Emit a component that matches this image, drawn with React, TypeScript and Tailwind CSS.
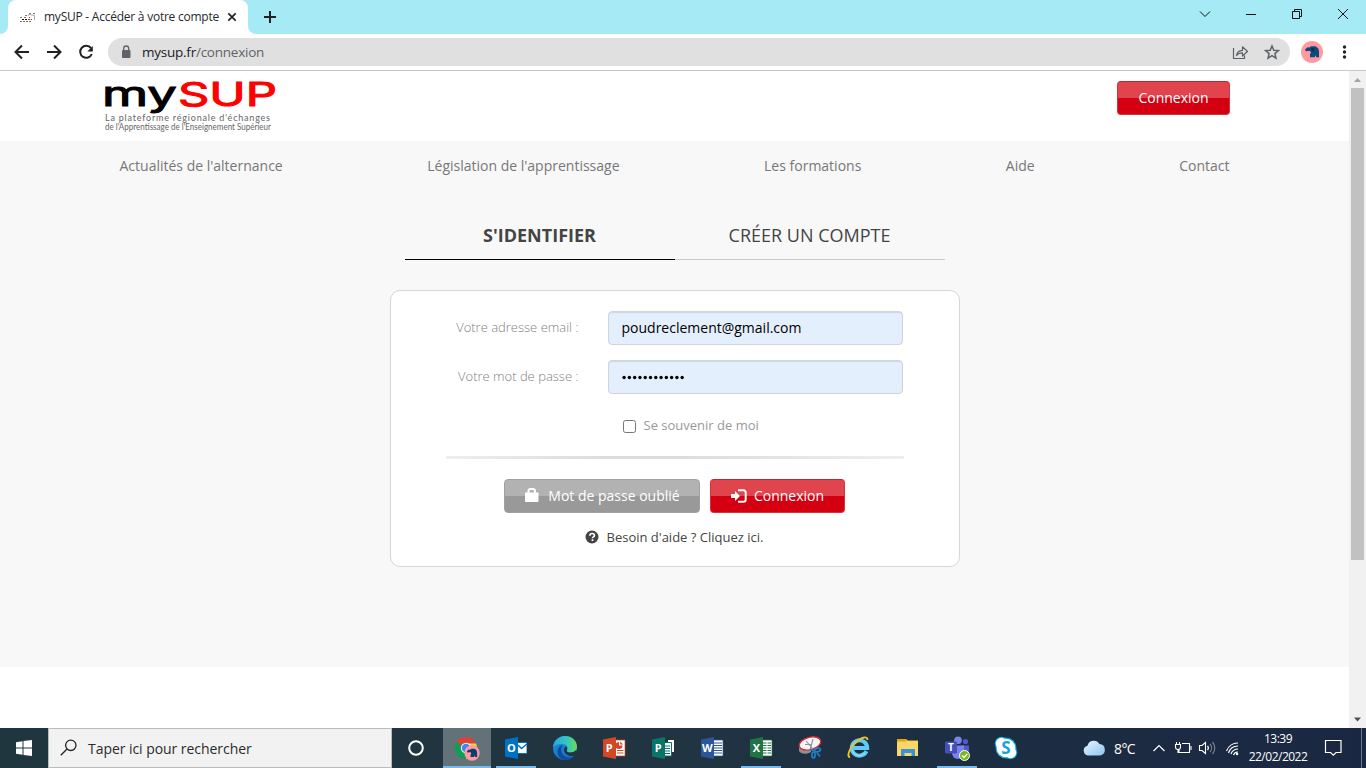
import React from "react";

const ui = "font-['Open_Sans','Noto_Sans',sans-serif]";

function Elephant({ className }: { className: string }) {
  return (
    <svg viewBox="0 0 22 22" className={className}>
      <circle cx="11" cy="11" r="11" fill="#ff9aa2" />
      <path d="M4 8.500 6.500 6.300 8.500 6.500 10 5.300h4.500l2.700 2 .8 3v6h-3v-1.500h-1V16.300H9v-3l1-1.800-1-1.500H6.500L5 10.500z" fill="#0c4a7c" />
      <path d="M10 7h3.500l-.5 3-2 .5z" fill="#0a2f55" />
    </svg>
  );
}

function TitleBar() {
  return (
    <div className="flex h-[34px] bg-[#a5eaf4]">
      <div className="flex h-[34px] w-2 shrink-0 items-end bg-white">
        <div className="h-full w-full rounded-br-lg bg-[#a5eaf4]" />
      </div>
      <div className="flex w-[240px] shrink-0 items-center rounded-t-lg bg-white pl-3">
        <svg width="16" height="16" viewBox="0 0 16 16">
          <path d="M0 8.500h2M4 8.500h2M0 12.500h12M5 6.500h2M9 4.500h2M13 4.500h2" stroke="#777" strokeWidth="1" strokeDasharray="2 1" />
          <path d="M2 10.500h6" stroke="#111" strokeWidth="1" strokeDasharray="2 1" />
          <path d="M8 10.500h4M9 8.500h1" stroke="#e22" strokeWidth="1" strokeDasharray="2 .7" />
          <path d="M9 5.500l6 1M14.500 7v4M8 7l2-3" stroke="#888" strokeWidth=".7" />
        </svg>
        <span className={`${ui} ml-2 w-[176px] whitespace-nowrap text-[12px] leading-4 tracking-[-0.24px] text-[#26292d]`}>
          mySUP - Accéder à votre compte
        </span>
        <svg width="16" height="16" viewBox="0 0 16 16" className="ml-[4px]">
          <path d="m4.300 4.300 7.400 7.400m0-7.400-7.400 7.400" stroke="#222" strokeWidth="1.700" />
        </svg>
      </div>
      <div className="flex h-[34px] w-2 shrink-0 bg-white">
        <div className="h-full w-full rounded-bl-lg bg-[#a5eaf4]" />
      </div>
      <svg width="28" height="34" viewBox="0 0 28 34">
        <path d="M14 11v12M8 17h12" stroke="#202124" strokeWidth="2" />
      </svg>
      <svg width="186" height="34" viewBox="1180 0 186 34" className="ml-auto" fill="none" stroke="#111" strokeWidth="1">
        <path d="m1200 11.500 5 5 5-5" />
        <path d="M1246 14.500h10" />
        <path d="M1292.500 11.500h7v7h-7zM1294.500 11v-1.500h7v7H1300" />
        <path d="m1338 9 10 10m0-10-10 10" />
      </svg>
    </div>
  );
}

function Toolbar() {
  return (
    <div className="flex h-[37px] items-center border-b border-[#c6c8c9] bg-white">
      <svg width="108" height="36" viewBox="0 34 108 36" fill="none" stroke="#202124" strokeWidth="2">
        <path d="M29 52H16M22 45.500 15.500 52l6.500 6.500" />
        <path d="M47 52h13M54 45.500l6.500 6.500-6.500 6.500" />
        <path d="M91 48.200a6 6 0 1 0 .8 5.800" />
        <path d="M92.800 46v5.500h-5.500z" fill="#202124" stroke="none" />
      </svg>
      <div className="flex h-7 w-[1182px] items-center rounded-full bg-[#e0e0e0] pl-3">
        <svg width="12" height="14" viewBox="0 0 12 14">
          <rect x="2" y="5" width="8.500" height="8" rx="1" fill="#5f6368" />
          <path d="M3.700 5V3.500a2.500 2.500 0 0 1 5 0V5" fill="none" stroke="#5f6368" strokeWidth="1.300" />
        </svg>
        <span className={`${ui} ml-[10px] text-[13.5px] leading-5 tracking-[-0.24px] text-[#202124]`}>
          mysup.fr<span className="text-[#5f6368]">/connexion</span>
        </span>
        <svg width="60" height="28" viewBox="1230 38 60 28" className="ml-auto" fill="none" stroke="#5f6368">
          <path d="M1233.500 48v10.500h11v-3" strokeWidth="1.200" />
          <path d="M1236.500 55.500c.6-3.500 3-5 6-5.200v-3.500l5 4.700-5 4.500v-3.200c-3 0-4.500.5-6 2.700z" strokeWidth="1.200" strokeLinejoin="round" />
          <path d="m1272 46 1.800 4.200 4.600.4-3.500 3 1.100 4.500-4-2.400-4 2.400 1.100-4.500-3.500-3 4.600-.4z" strokeWidth="1.500" />
        </svg>
      </div>
      <Elephant className="ml-[11px] h-[22px] w-[22px]" />
      <svg width="8" height="16" viewBox="0 0 8 16" className="ml-[18px]" fill="#202124">
        <circle cx="3.500" cy="3" r="1.700" />
        <circle cx="3.500" cy="8" r="1.700" />
        <circle cx="3.500" cy="13" r="1.700" />
      </svg>
    </div>
  );
}

function Logo() {
  return (
    <svg width="190" height="70" viewBox="96 71 190 70" overflow="visible">
      <g fontFamily="Inter, sans-serif" fontWeight="400" strokeWidth="1">
        <text x="102" y="105.500" fontSize="34" textLength="75" lengthAdjust="spacingAndGlyphs" fill="#000" stroke="#000">my</text>
        <text x="178" y="105.500" fontSize="33" textLength="99" lengthAdjust="spacingAndGlyphs" fill="#f00" stroke="#f00">SUP</text>
      </g>
      <g fontFamily="Lato, sans-serif" fontSize="9" fill="#666">
        <text x="105" y="120.500" textLength="165" lengthAdjust="spacing">La plateforme régionale d'échanges</text>
        <text x="105" y="129.500" fontSize="8.500" textLength="166" lengthAdjust="spacingAndGlyphs">de l'Apprentissage de l'Enseignement Supérieur</text>
      </g>
    </svg>
  );
}

const button = "flex h-[34px] items-center justify-center rounded-[4px] border text-[14px] leading-5 text-white";
const red = "border-[#d9303b] border-t-[#c9202b] bg-[linear-gradient(#e0444d_50%,#d40012_50%)]";
const grey = "border-[#a0a0a0] bg-[linear-gradient(#b2b2b2_50%,#999_50%)]";

function Field({ label, value, secret }: { label: string; value: string; secret?: boolean }) {
  return (
    <div className="flex h-[34px] items-center">
      <label className="w-[188px] text-right text-[13px] font-light text-[#808080]">{label}</label>
      <div className="ml-[29px] flex h-[34px] w-[295px] items-center rounded-[4px] border border-[#d2d4d8] bg-[#e4effd] pl-[13px] text-[14px] text-black shadow-[inset_0_1px_1px_rgba(0,0,0,0.1)]">
        {secret ? (
          <svg width="66" height="8" viewBox="0 0 66 8" className="-ml-px" aria-label={value}>
            {Array.from({ length: 12 }, (_, i) => (
              <circle key={i} cx={3.100 + i * 5.280} cy="4.500" r="1.700" />
            ))}
          </svg>
        ) : (
          <span className="-mt-[2px]">{value}</span>
        )}
      </div>
    </div>
  );
}

function Page() {
  return (
    <div className="flex h-[657px] bg-white font-['Open_Sans',sans-serif]">
      <main className="w-[1349px]">
        <header className="flex h-[70px] items-start justify-between pl-[96px] pr-[119px]">
          <Logo />
          <button className={`${button} ${red} mt-[10px] w-[113px]`}>Connexion</button>
        </header>
        <div className="h-[526px] bg-[#f8f8f8]">
          <nav className="flex h-[48px] items-center justify-between px-[119.5px] text-[14px] text-[#777]">
            <a>Actualités de l'alternance</a>
            <a>Législation de l'apprentissage</a>
            <a>Les formations</a>
            <a>Aide</a>
            <a>Contact</a>
          </nav>
          <div className="mx-auto mt-[22px] flex h-[49px] w-[540px] text-center text-[18px] leading-[49px] text-[#444]">
            <div className="h-[49px] w-1/2 border-b border-black font-bold">S'IDENTIFIER</div>
            <div className="h-[49px] w-1/2 border-b border-[#c8c8c8]">CRÉER UN COMPTE</div>
          </div>
          <section className="mx-auto mt-[30px] flex h-[277px] w-[570px] flex-col rounded-[10px] border border-[#d6d6d6] bg-white pt-5">
            <Field label="Votre adresse email :" value="poudreclement@gmail.com" />
            <div className="h-[15px]" />
            <Field label="Votre mot de passe :" value="••••••••••••" secret />
            <div className="mt-[22px] flex h-5 items-center pl-[232px] text-[13px] text-[#999]">
              <span className="mr-[8px] mt-px h-[13px] w-[13px] rounded-[2.5px] border border-[#767676] bg-white" />
              Se souvenir de moi
            </div>
            <div className="ml-[55px] mt-[20px] h-[3px] w-[458px] bg-[linear-gradient(90deg,#eee,#dcdcdc_35%,#dcdcdc_50%,#eee)]" />
            <div className="mt-5 flex gap-[10px] pl-[113px]">
              <button className={`${button} ${grey} w-[196px] pl-[2px]`}>
                <svg width="14" height="14" viewBox="0 0 14 14" className="-mt-[3px] mr-[9px]" fill="#fff">
                  <path d="M0 4.500h13.500v8.700a.8.800 0 0 1-.8.800H.8a.8.800 0 0 1-.8-.8z" />
                  <path d="M3.500 5V2.700A1.700 1.700 0 0 1 5.200 1h3a1.700 1.700 0 0 1 1.700 1.700V5" fill="none" stroke="#fff" strokeWidth="2" />
                </svg>
                Mot de passe oublié
              </button>
              <button className={`${button} ${red} w-[135px] pl-px`}>
                <svg width="16" height="14" viewBox="0 0 16 14" className="-mt-px mr-[7px]">
                  <path d="M0 5h4V2l5 5-5 5V9H0z" fill="#fff" />
                  <path d="M7 1.200h5.500a2.200 2.200 0 0 1 2.200 2.200v7.200a2.200 2.200 0 0 1-2.200 2.200H7" fill="none" stroke="#fff" strokeWidth="2" />
                </svg>
                Connexion
              </button>
            </div>
            <div className="mt-[15px] flex h-5 items-center pl-[194px] text-[13px] text-[#444]">
              <svg width="14" height="14" viewBox="0 0 14 14" className="-mt-[3px] mr-[8px]">
                <circle cx="7" cy="7" r="6.500" fill="#444" />
                <path d="M4.900 5.700C4.900 4 6 3.500 7.100 3.500c1.300 0 2.300.7 2.300 1.900 0 1.500-1.900 1.500-1.900 2.800M7.500 9.200v1.700" fill="none" stroke="#fff" strokeWidth="1.700" />
              </svg>
              <span>Besoin d'aide ? Cliquez ici.</span>
            </div>
          </section>
        </div>
      </main>
      <aside className="flex w-[17px] flex-col items-center bg-[#f1f1f1]">
        <svg width="17" height="17" viewBox="0 0 17 17"><path d="M5 11 8.500 7l3.500 4z" fill="#a3a3a3" /></svg>
        <div className="h-[472px] w-[13px] bg-[#c1c1c1]" />
        <svg width="17" height="17" viewBox="0 0 17 17" className="mt-auto"><path d="M5 6.500h7l-3.500 4z" fill="#505050" /></svg>
      </aside>
    </div>
  );
}

function Office({ color, letter, children }: { color: string; letter: string; children: React.ReactNode }) {
  return (
    <svg width="24" height="24" viewBox="0 0 24 24">
      {children}
      <path d="M1 3.500 14 1v22L1 20.500z" fill={color} />
      <text x="7.300" y="16" textAnchor="middle" fontFamily="Open Sans, sans-serif" fontWeight="700" fontSize="11" fill="#fff">{letter}</text>
    </svg>
  );
}

const apps: { name: string; open?: boolean; icon: React.ReactNode }[] = [
  {
    name: "outlook", open: true,
    icon: (
      <Office color="#0072c6" letter="O">
        <path d="M13 6h10v12H13z" fill="#0072c6" />
        <path d="M14 7h8.500v10H14z" fill="#fff" />
        <path d="m14 9 3.500 3.500L23 8" fill="none" stroke="#0072c6" strokeWidth="1.500" />
      </Office>
    ),
  },
  {
    name: "edge",
    icon: (
      <svg width="26" height="26" viewBox="0 0 26 26">
        <defs>
          <linearGradient id="edgeTop"><stop offset="0" stopColor="#23a9df" /><stop offset=".6" stopColor="#36c7be" /><stop offset="1" stopColor="#68dc4e" /></linearGradient>
          <linearGradient id="edgeLow" y2="1"><stop offset="0" stopColor="#1a8fd8" /><stop offset="1" stopColor="#1668c4" /></linearGradient>
        </defs>
        <circle cx="13" cy="13" r="12" fill="url(#edgeLow)" />
        <path d="M1 12C2 5 7 1 13 1c7 0 12 5 12 10.500 0 4-3 6-6.500 6-3 0-4.500-1.300-3.500-2.800C16.500 12 14 9 10 9c-4 0-7 1-9 3z" fill="url(#edgeTop)" />
        <path d="M9.500 12.500C8 18 12 22.500 17 22.500c2 0 4-.7 5.500-1.800-2 3-5.500 4.300-9 4.300C9 25 5.500 21 5.500 16.500c0-3 2-5.500 5-6.500z" fill="#114a9a" />
        <path d="M15 14.700c-1 1.500.5 2.800 3.500 2.800 2.500 0 4.500-1 5.500-2.500l1 3-2.500 2.700C19 22 12.500 20 12 15c0-2 1-3 2.300-3.500 1 .7 1.300 2 .7 3.200z" fill="#22343f" />
      </svg>
    ),
  },
  {
    name: "powerpoint",
    icon: (
      <Office color="#d24726" letter="P">
        <path d="M13 4h10v16H13z" fill="#fff" stroke="#d24726" strokeWidth=".7" />
        <path d="M17 6a3.500 3.500 0 1 0 3.500 3.500H17z" fill="#d24726" /><path d="M18.200 5.500v3h3z" fill="#d24726" />
        <path d="M15 14.500h6.500M15 17h6.500" stroke="#d24726" />
      </Office>
    ),
  },
  {
    name: "publisher",
    icon: (
      <Office color="#077568" letter="P">
        <path d="M17 4h6v12h-6z" fill="#fff" /><path d="M13 6.500h7.500V20H13z" fill="#fff" stroke="#077568" />
        <path d="M14 10h5M14 12.500h5M14 15h5M14 17.500h5" stroke="#077568" />
      </Office>
    ),
  },
  {
    name: "word",
    icon: (
      <Office color="#2b579a" letter="W">
        <path d="M13 4h10v16H13z" fill="#fff" stroke="#2b579a" strokeWidth=".7" />
        <path d="M14 7h8M14 9.500h8M14 12h8M14 14.500h8M14 17h8" stroke="#2b579a" />
      </Office>
    ),
  },
  {
    name: "excel", open: true,
    icon: (
      <Office color="#217346" letter="X">
        <path d="M13 4h10v16H13z" fill="#fff" stroke="#217346" strokeWidth=".7" />
        <path d="M14 7h8M14 9.500h8M14 12h8M14 14.500h8M14 17h8" stroke="#217346" /><path d="M18 5v14" stroke="#fff" />
      </Office>
    ),
  },
  {
    name: "snip",
    icon: (
      <svg width="26" height="26" viewBox="0 0 26 26">
        <path d="M2 12v4c2 3.500 8 3.500 12 1v-5z" fill="#8c8f93" />
        <ellipse cx="13" cy="8.500" rx="11" ry="6.200" transform="rotate(-15 13 8.500)" fill="#f5f5f6" stroke="#d62f36" strokeWidth="1.300" />
        <path d="m9 6 7 8M16 4l-3 11M8 9.500h6" stroke="#8d9298" strokeWidth="1.100" fill="none" />
        <g fill="none" stroke="#2282c8" strokeWidth="1.700"><path d="m13 14 4 2" /><ellipse cx="20.500" cy="15" rx="3" ry="1.700" transform="rotate(-20 20.500 15)" /><ellipse cx="16.500" cy="20" rx="1.600" ry="3" /><path d="M20 18l3 3.500" /></g>
      </svg>
    ),
  },
  {
    name: "explorer-e",
    icon: (
      <svg width="26" height="26" viewBox="0 0 26 26" className="-ml-[2px]">
        <path d="M21.500 16.200a7.700 7.700 0 1 1 .7-3.200H8" fill="none" stroke="#5dcbf5" strokeWidth="4" />
        <path d="M20 18a7.500 7.500 0 0 1-13-3" fill="none" stroke="#a1e5fb" strokeWidth="1" />
        <path d="M5 22.500C1.500 21 4.500 12.500 11 7S22.500 1 22.500 5" fill="none" stroke="#f2c028" strokeWidth="1.900" />
      </svg>
    ),
  },
  {
    name: "files",
    icon: (
      <svg width="24" height="24" viewBox="0 0 24 24">
        <path d="M1 3h9l2 1.500h10V7H1z" fill="#f0bd3b" /><path d="M1 5h21v15H1z" fill="#fbd667" />
        <path d="M1 3h8.500l1 2.500H1z" fill="#e8a20c" />
        <path d="M5 20v-7h14v7h-3.500v-3h-7v3z" fill="#3693d8" />
      </svg>
    ),
  },
  {
    name: "teams", open: true,
    icon: (
      <svg width="26" height="26" viewBox="0 0 26 26">
        <circle cx="14" cy="5.300" r="3.800" fill="#7b83eb" /><circle cx="21.500" cy="6.500" r="2.600" fill="#5059c9" />
        <path d="M17 10.500h8v6.500a4 4 0 0 1-8 0z" fill="#5059c9" /><path d="M8 10.500h12V18a6 6 0 0 1-12 0z" fill="#7b83eb" />
        <rect x="1" y="6.500" width="12" height="12" rx="1" fill="#464eb8" />
        <text x="7" y="16" textAnchor="middle" fontFamily="Open Sans, sans-serif" fontWeight="700" fontSize="10" fill="#fff">T</text>
        <circle cx="20.500" cy="20.500" r="5" fill="#78b817" stroke="#fff" /><path d="m18 20.500 2 2 3.300-3.700" fill="none" stroke="#fff" strokeWidth="1.400" />
      </svg>
    ),
  },
  {
    name: "skype",
    icon: (
      <svg width="24" height="24" viewBox="0 0 24 24">
        <g fill="#0ea5e8">
          <circle cx="7.500" cy="7.500" r="6.800" /><circle cx="16.500" cy="16.500" r="6.800" /><circle cx="12" cy="12" r="10.500" />
        </g>
        <g fill="#fff">
          <circle cx="7.500" cy="7.500" r="5.700" /><circle cx="16.500" cy="16.500" r="5.700" /><circle cx="12" cy="12" r="9.300" />
        </g>
        <text x="12" y="18" textAnchor="middle" fontFamily="Open Sans, sans-serif" fontWeight="700" fontSize="17" fill="#0ea5e8">S</text>
      </svg>
    ),
  },
];

function Taskbar() {
  return (
    <footer className={`${ui} flex h-10 items-stretch bg-[linear-gradient(90deg,#20363f,#213441_50%,#1d2f42_65%,#1a2742)] text-white`}>
      <div className="flex w-12 items-center justify-center">
        <svg width="16" height="16" viewBox="0 0 16 16" fill="#fff">
          <path d="M0 2.200 6.500 1.300v6.200H0zM7.500 1.100 16 0v7.500H7.500zM0 8.500h6.500v6.200L0 13.800zM7.500 8.500H16V16l-8.500-1.100z" />
        </svg>
      </div>
      <div className="flex w-[344px] items-center border border-[#b9bbbd] bg-[#f2f2f2] pl-[11px]">
        <svg width="18" height="18" viewBox="0 0 18 18" fill="none" stroke="#222" strokeWidth="1.300">
          <circle cx="10.800" cy="6.300" r="5.200" /><path d="M7 10 .8 16.200" />
        </svg>
        <span className="ml-[10px] mt-[2px] text-[14px] leading-5 tracking-[-0.05px] text-[#2b2b2b]">Taper ici pour rechercher</span>
      </div>
      <div className="flex w-12 items-center justify-center">
        <svg width="18" height="18" viewBox="0 0 18 18"><circle cx="9" cy="9" r="6.800" fill="none" stroke="#fff" strokeWidth="2" /></svg>
      </div>
      <div className="ml-[3px] flex gap-px">
        <div className="flex w-12 items-center justify-center border-b-2 border-[#76b9ed] bg-[#637178]">
          <svg width="26" height="26" viewBox="0 0 26 26" className="mt-[3px]">
            <path d="M12 12 2.500 6A11 11 0 0 1 21.800 7.500z" fill="#db4437" />
            <path d="M12 12 2.500 6A11 11 0 0 0 12 23z" fill="#0f9d58" />
            <path d="M12 7.500h10A11 11 0 0 1 12 23l4-8z" fill="#ffcd40" />
            <circle cx="12" cy="12" r="5.200" fill="#f1f1f1" /><circle cx="12" cy="12" r="4.200" fill="#4285f4" />
            <g transform="translate(10 9) scale(.73)">
              <circle cx="11" cy="11" r="10.500" fill="#ff9aa2" />
              <path d="M4 8.500 6.500 6.300 8.500 6.500 10 5.300h4.500l2.700 2 .8 3v6h-3v-1.500h-1V16.300H9v-3l1-1.800-1-1.500H6.500L5 10.500z" fill="#0c3d70" />
            </g>
          </svg>
        </div>
        {apps.map((app) => (
          <div key={app.name} className="flex w-12 flex-col items-center">
            <div className="flex h-[38px] items-center pt-[2px]">{app.icon}</div>
            <div className={`h-[2px] w-10 ${app.open ? "bg-[#76b9ed]" : ""}`} />
          </div>
        ))}
      </div>
      <div className="ml-auto flex items-center">
        <svg width="24" height="20" viewBox="0 0 24 20">
          <defs><linearGradient id="cloud" y2="1" x2="1"><stop offset="0" stopColor="#e9f5ff" /><stop offset="1" stopColor="#8cc5f0" /></linearGradient></defs>
          <path d="M6 17.500a5 5 0 0 1-.5-9.800A6.500 6.500 0 0 1 17.500 6a5.800 5.800 0 0 1 .5 11.500z" fill="url(#cloud)" />
        </svg>
        <span className="ml-[8px] w-[31px] whitespace-nowrap pt-px text-[14px] tracking-[-0.6px]">8°C</span>
        <svg width="100" height="40" viewBox="1145 728 100 40" fill="none" stroke="#fff" strokeWidth="1.200">
          <path d="m1153.500 751 5.500-5.500 5.500 5.500" />
          <path d="M1182 743.500h7.500v9H1179V749M1191 746v4M1176.500 742v3M1179.500 742v3M1175.500 744.500h5v2.500a2.500 2.500 0 0 1-5 0zM1178 750v3" strokeWidth="1.100" />
          <path d="M1199.500 745.500h2.500l3.500-3v11l-3.500-3h-2.500z" strokeWidth="1.100" />
          <path d="M1207.500 746a3 3 0 0 1 0 4" />
          <path d="M1210 744a6 6 0 0 1 0 8M1212.500 742a9 9 0 0 1 0 12" stroke="#77808f" />
          <path d="M1226.500 751a12 12 0 0 1 11.500-8M1228.500 753a10 10 0 0 1 9.500-7M1231 754a7.500 7.500 0 0 1 7-5M1233.500 755a4.500 4.500 0 0 1 4.500-3" />
          <circle cx="1237" cy="754" r="1.300" fill="#fff" stroke="none" />
        </svg>
        <div className="flex h-10 w-[66px] flex-col items-center pt-[2px] text-[12px] leading-[18px] tracking-[-0.5px]">
          <span>13:39</span>
          <span className="whitespace-nowrap">22/02/2022</span>
        </div>
        <svg width="55" height="40" viewBox="1311 728 55 40" fill="none" stroke="#fff" strokeWidth="1.200">
          <path d="M1325.500 740.500h15.500v12h-5l-2.700 2.700-2.700-2.700h-5.100z" />
          <path d="M1361.500 728v40" stroke="#707a8a" strokeWidth="1" />
        </svg>
      </div>
    </footer>
  );
}

export default function App() {
  return (
    <div className="flex h-[768px] w-[1366px] flex-col overflow-hidden bg-white">
      <TitleBar />
      <Toolbar />
      <Page />
      <Taskbar />
    </div>
  );
}
